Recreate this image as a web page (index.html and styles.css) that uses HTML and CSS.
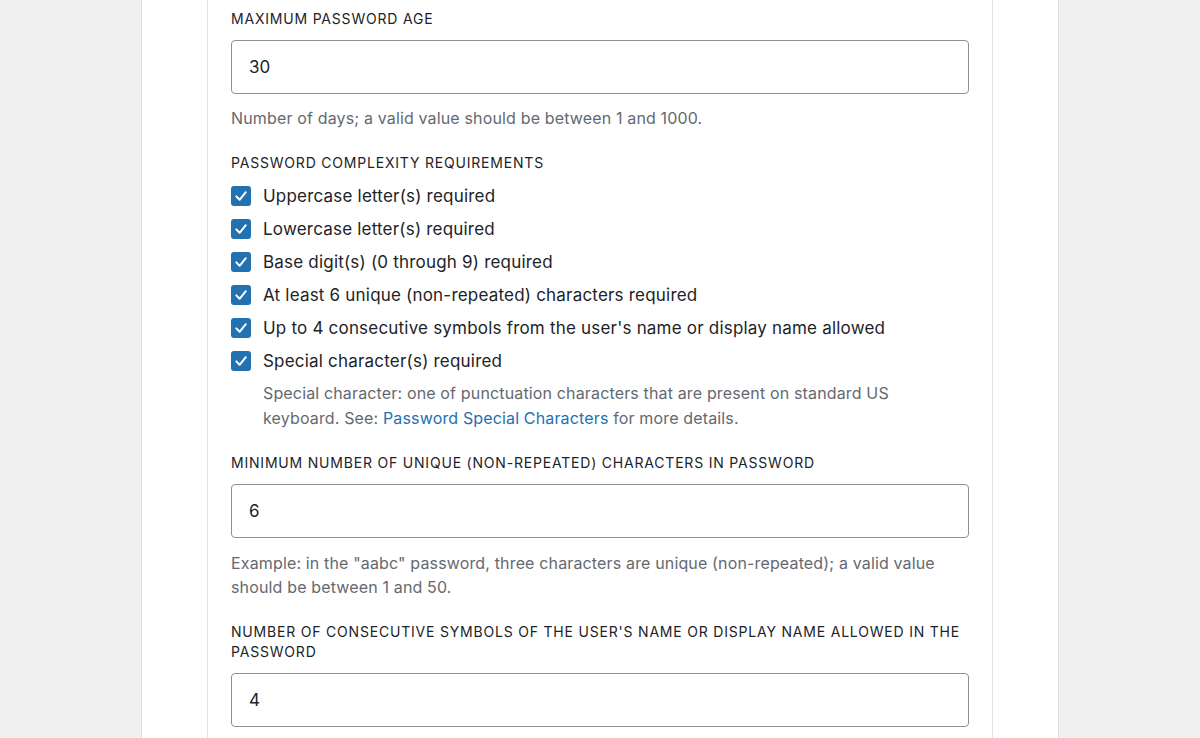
FILE: index.html
```html
<!DOCTYPE html>
<html lang="en">
<head>
<meta charset="utf-8">
<title>Password policy</title>
<link rel="stylesheet" href="styles.css">
</head>
<body>
<div class="panel">
  <div class="column">
    <div class="field">
      <label class="label">Maximum Password Age</label>
      <div class="input">30</div>
      <p class="help">Number of days; a valid value should be between 1 and 1000.</p>
    </div>

    <div class="field field-checks">
      <div class="label">Password Complexity Requirements</div>
      <ul class="checks">
        <li class="check"><span class="box"><svg viewBox="0 0 20 20" width="20" height="20"><path d="M5.3 10.4 L8.6 13.8 L14.8 6.2" fill="none" stroke="#fff" stroke-width="2" stroke-linecap="round" stroke-linejoin="round"/></svg></span>Uppercase letter(s) required</li>
        <li class="check"><span class="box"><svg viewBox="0 0 20 20" width="20" height="20"><path d="M5.3 10.4 L8.6 13.8 L14.8 6.2" fill="none" stroke="#fff" stroke-width="2" stroke-linecap="round" stroke-linejoin="round"/></svg></span>Lowercase letter(s) required</li>
        <li class="check"><span class="box"><svg viewBox="0 0 20 20" width="20" height="20"><path d="M5.3 10.4 L8.6 13.8 L14.8 6.2" fill="none" stroke="#fff" stroke-width="2" stroke-linecap="round" stroke-linejoin="round"/></svg></span>Base digit(s) (0 through 9) required</li>
        <li class="check"><span class="box"><svg viewBox="0 0 20 20" width="20" height="20"><path d="M5.3 10.4 L8.6 13.8 L14.8 6.2" fill="none" stroke="#fff" stroke-width="2" stroke-linecap="round" stroke-linejoin="round"/></svg></span>At least 6 unique (non-repeated) characters required</li>
        <li class="check"><span class="box"><svg viewBox="0 0 20 20" width="20" height="20"><path d="M5.3 10.4 L8.6 13.8 L14.8 6.2" fill="none" stroke="#fff" stroke-width="2" stroke-linecap="round" stroke-linejoin="round"/></svg></span>Up to 4 consecutive symbols from the user's name or display name allowed</li>
        <li class="check"><span class="box"><svg viewBox="0 0 20 20" width="20" height="20"><path d="M5.3 10.4 L8.6 13.8 L14.8 6.2" fill="none" stroke="#fff" stroke-width="2" stroke-linecap="round" stroke-linejoin="round"/></svg></span>Special character(s) required</li>
      </ul>
      <p class="help help-indent">Special character: one of punctuation characters that are present on standard US keyboard. See: <a href="#">Password Special Characters</a> for more details.</p>
    </div>

    <div class="field">
      <label class="label">Minimum number of unique (non-repeated) characters in password</label>
      <div class="input">6</div>
      <p class="help help-loose">Example: in the "aabc" password, three characters are unique (non-repeated); a valid value should be between 1 and 50.</p>
    </div>

    <div class="field">
      <label class="label">Number of consecutive symbols of the user's name or display name allowed in the password</label>
      <div class="input">4</div>
    </div>
  </div>
</div>
</body>
</html>
```

FILE: styles.css
```css
html, body {
  margin: 0;
  padding: 0;
}

body {
  background: #f0f0f1;
  font-family: Inter, "Noto Sans", "Liberation Sans", sans-serif;
  color: #1d2327;
  height: 738px;
  overflow: hidden;
}

.panel {
  margin: 0 auto;
  padding: 0 65px;
  box-sizing: border-box;
  width: 918px;
  background: #fff;
  border-left: 1px solid #dcdcde;
  border-right: 1px solid #dcdcde;
  min-height: 738px;
}

.column {
  border-left: 1px solid #e2e2e4;
  border-right: 1px solid #e2e2e4;
  padding: 9px 23px 0 23px;
  min-height: 738px;
  box-sizing: border-box;
}

.field {
  margin-bottom: 23px;
}

.field-checks {
  margin-bottom: 22px;
}

.label {
  display: block;
  font-size: 14px;
  line-height: 20px;
  text-transform: uppercase;
  letter-spacing: 0.8px;
  color: #1d2327;
}

.input {
  margin-top: 11px;
  height: 54px;
  box-sizing: border-box;
  border: 1px solid #8c8f94;
  border-radius: 4px;
  padding: 0 17px;
  display: flex;
  align-items: center;
  font-size: 17px;
  color: #1d2327;
}

.help {
  margin: 12px 0 0;
  font-size: 16px;
  line-height: 24px;
  letter-spacing: 0.15px;
  color: #646970;
}

.help-loose {
  margin-top: 13px;
}

.help a {
  color: #2271b1;
  text-decoration: none;
}

.checks {
  list-style: none;
  margin: 6px 0 0;
  padding: 0;
}

.check {
  display: flex;
  align-items: center;
  gap: 12px;
  height: 33px;
  font-size: 17px;
  letter-spacing: 0.2px;
  color: #1d2327;
}

.box {
  width: 20px;
  height: 20px;
  border-radius: 3px;
  background: #2271b1;
  display: flex;
  flex-shrink: 0;
}

.help-indent {
  margin: 4px 0 0 32px;
  max-width: 640px;
  line-height: 25px;
}
```
